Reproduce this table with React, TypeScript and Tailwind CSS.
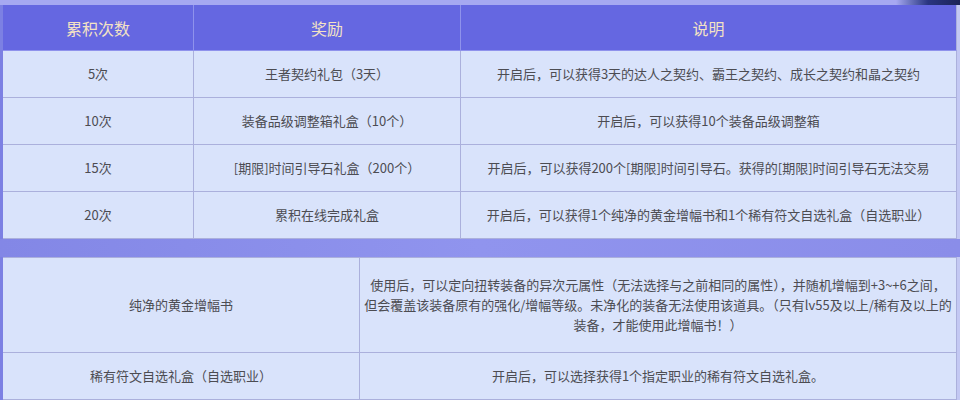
import React from "react";

const rows = [
  ["5次", "王者契约礼包（3天）", "开启后，可以获得3天的达人之契约、霸王之契约、成长之契约和晶之契约"],
  ["10次", "装备品级调整箱礼盒（10个）", "开启后，可以获得10个装备品级调整箱"],
  ["15次", "[期限]时间引导石礼盒（200个）", "开启后，可以获得200个[期限]时间引导石。获得的[期限]时间引导石无法交易"],
  ["20次", "累积在线完成礼盒", "开启后，可以获得1个纯净的黄金增幅书和1个稀有符文自选礼盒（自选职业）"],
];

const cell = "flex items-center justify-center text-center whitespace-nowrap border-r border-b border-[#abb0dc]";

const App = () => {
  return (
    <div
      className="relative w-[960px] h-[400px] overflow-hidden bg-[#8a8de9] text-[13px] text-[#4c4c52]"
      style={{ fontFamily: '"Microsoft YaHei", "Noto Sans CJK SC", sans-serif' }}
    >
      <div className="relative h-[5px] bg-[#a6a8f1]">
        <div className="absolute right-0 top-0 h-[5px] w-[64px] bg-gradient-to-r from-[#a6a8f1] via-[#2a3580] to-[#1c2458]" />
      </div>
      <div className="flex">
        <div className="w-[3px] bg-[#7c80e3]" />
        <div className="w-[954px]">
          <div className="grid grid-cols-[191px_267px_496px] bg-[#d9e3fb]">
            <div className={`${cell} h-[46px] bg-[#6567e1] text-[16px] text-[#f3e2c4] border-r-[#8f92ec] border-b-[#8f92ec]`}>累积次数</div>
            <div className={`${cell} h-[46px] bg-[#6567e1] text-[16px] text-[#f3e2c4] border-r-[#8f92ec] border-b-[#8f92ec]`}>奖励</div>
            <div className={`${cell} h-[46px] bg-[#6567e1] text-[16px] text-[#f3e2c4] border-b-[#8f92ec]`}>说明</div>
            {rows.map((r) => (
              <React.Fragment key={r[0]}>
                <div className={`${cell} h-[47px]`}>{r[0]}</div>
                <div className={`${cell} h-[47px]`}>{r[1]}</div>
                <div className={`${cell} h-[47px]`}>{r[2]}</div>
              </React.Fragment>
            ))}
          </div>
        </div>
        <div className="w-[3px] bg-[#c3c8f3]" />
      </div>
      <div className="h-[18px] bg-gradient-to-r from-[#8387e6] via-[#9094ee] to-[#8a8de9]" />
      <div className="flex">
        <div className="w-[3px] bg-[#7c80e3]" />
        <div className="w-[954px] grid grid-cols-[357px_597px] bg-[#d9e3fb] border-t border-[#abb0dc]">
          <div className={`${cell} h-[95px]`}>纯净的黄金增幅书</div>
          <div className={`${cell} h-[95px] flex-col leading-[20px]`}>
            <span>使用后，可以定向扭转装备的异次元属性（无法选择与之前相同的属性），并随机增幅到+3~+6之间，</span>
            <span>但会覆盖该装备原有的强化/增幅等级。未净化的装备无法使用该道具。（只有lv55及以上/稀有及以上的</span>
            <span>装备，才能使用此增幅书！）</span>
          </div>
          <div className={`${cell} h-[47px]`}>稀有符文自选礼盒（自选职业）</div>
          <div className={`${cell} h-[47px]`}>开启后，可以选择获得1个指定职业的稀有符文自选礼盒。</div>
        </div>
        <div className="w-[3px] bg-[#c3c8f3]" />
      </div>
    </div>
  );
};

export default App;
